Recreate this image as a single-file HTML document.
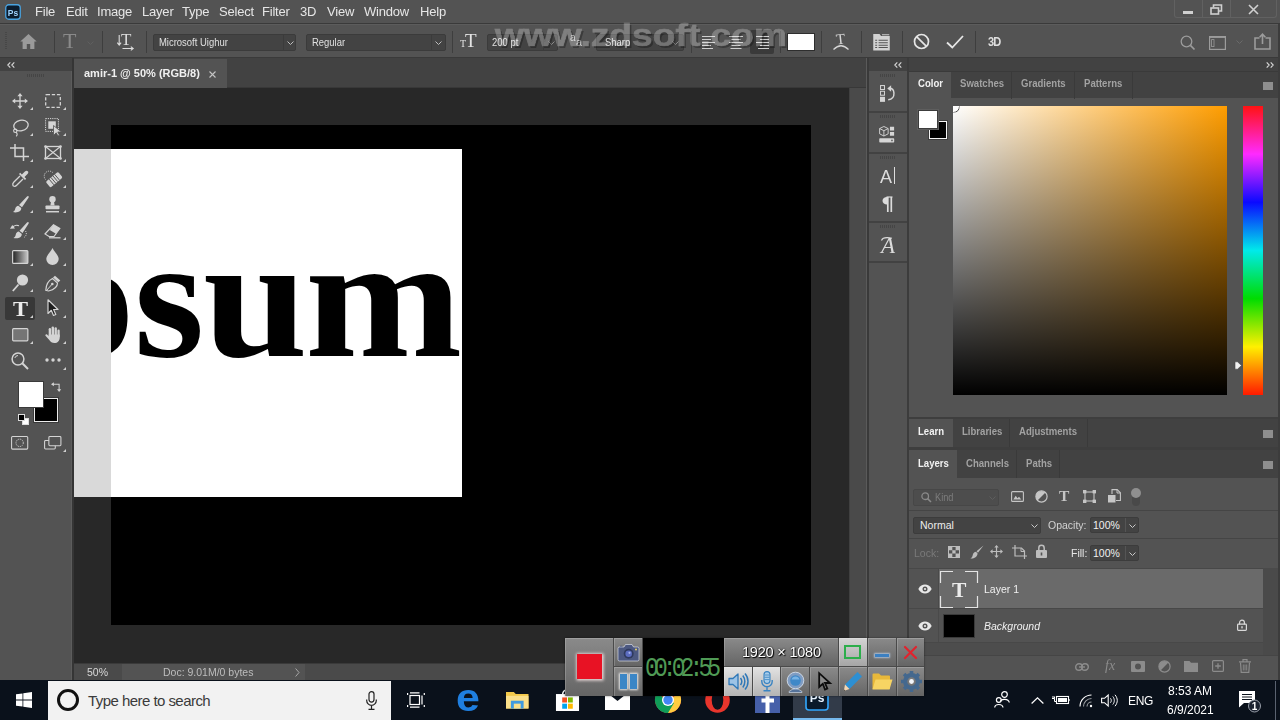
<!DOCTYPE html>
<html lang="en">
<head>
<meta charset="utf-8">
<title>amir-1 @ 50% (RGB/8)</title>
<style>
*{box-sizing:border-box;margin:0;padding:0}
html,body{width:1280px;height:720px;overflow:hidden;background:#535353;font-family:"Liberation Sans",sans-serif;}
#root{position:relative;width:1280px;height:720px;overflow:hidden;background:#535353;color:#ddd;font-size:11px}
.abs{position:absolute}
.t{position:absolute;white-space:nowrap;line-height:1}
svg{position:absolute;overflow:visible}
/* menu bar */
#menubar{left:0;top:0;width:1280px;height:24px;background:#535353;border-bottom:1px solid #3a3a3a}
#menubar .t{top:5px;font-size:13px;color:#e6e6e6;letter-spacing:-0.2px}
/* options bar */
#optbar{left:0;top:24px;width:1280px;height:34px;background:#535353;border-top:1px solid #5c5c5c;border-bottom:1px solid #3a3a3a}
.vsep{position:absolute;width:1px;background:#3e3e3e;top:8px;height:20px}
.dd{position:absolute;background:#434343;border:1px solid #3b3b3b;border-radius:2px;height:17px;top:8.500px}
.dd .t{top:2.500px;left:5px;font-size:10.5px;color:#e0e0e0;transform:scaleX(.9);transform-origin:0 50%}
.big{top:61.800px;font-family:'Liberation Serif',serif;font-weight:bold;font-size:173px;color:#000;transform-origin:0 0}
/* left toolbar */
#tools{left:0;top:58px;width:74px;height:623px;background:#535353;border-right:2px solid #353535;box-shadow:inset -1px 0 0 #5c5c5c}
.hdr{position:absolute;left:0;top:0;height:13px;background:#424242;width:100%}
/* document */
#doc{left:74px;top:58px;width:793px;height:623px;background:#282828}
#tabbar{left:0;top:0;width:793px;height:30px;background:#424242;border-bottom:1px solid #383838}
#tab{left:0;top:1px;width:153px;height:29px;background:#535353}
/* right */
#strip{left:869px;top:58px;width:39px;height:623px;background:#535353}
#rpanel{left:909px;top:58px;width:371px;height:623px;background:#535353}
.grip{position:absolute;width:16px;height:3px;background:repeating-linear-gradient(90deg,#454545 0 1px,transparent 1px 2px)}
.ptab{position:absolute;top:0;height:27px;font-size:11px;font-weight:bold;color:#a2a2a2;line-height:23px;padding:0 0 0 9px;border-right:1px solid #3a3a3a}
.ptab span{display:inline-block;transform:scaleX(.87);transform-origin:0 50%}
.lh25 .ptab{line-height:25px;height:28px}.lh27 .ptab{line-height:27px;height:28px}
.ptab.on{background:#535353;color:#f2f2f2;border-right:none}
.pmenu{position:absolute;left:354px;width:10px;height:8px;background:#8e8e8e}
.rc{position:absolute;background:linear-gradient(#8a8a8a,#656565);box-shadow:inset 1px 1px 0 rgba(255,255,255,.18)}
.rc.hi{background:linear-gradient(#d4d4d4,#a6a6a6)}
.rc.hi2{background:linear-gradient(#e2e2e2,#b4b4b4)}
/* taskbar */
#taskbar{left:0;top:680px;width:1280px;height:40px;background:#0a111b}
</style>
</head>
<body>
<div id="root">

<!-- MENU BAR -->
<div id="menubar" class="abs">
  <svg style="left:5px;top:4px" width="16" height="16" viewBox="0 0 16 16"><rect x="0.75" y="0.75" width="14.5" height="14.5" rx="3" fill="#0b1c2e" stroke="#4aa3e0" stroke-width="1.3"/><text x="8" y="11.6" font-family="Liberation Sans, sans-serif" font-size="8.5" font-weight="bold" fill="#9fd4ff" text-anchor="middle">Ps</text></svg>
  <span class="t" style="left:35px">File</span>
  <span class="t" style="left:66px">Edit</span>
  <span class="t" style="left:97px">Image</span>
  <span class="t" style="left:142px">Layer</span>
  <span class="t" style="left:182px">Type</span>
  <span class="t" style="left:219px">Select</span>
  <span class="t" style="left:262px">Filter</span>
  <span class="t" style="left:300px">3D</span>
  <span class="t" style="left:327px">View</span>
  <span class="t" style="left:364px">Window</span>
  <span class="t" style="left:420px">Help</span>
  <!-- window controls -->
  <div class="abs" style="left:1174px;top:0;width:103px;height:18px;border:1px solid #616161;border-top:none;border-radius:0 0 3px 3px"></div>
  <div class="abs" style="left:1202px;top:0;width:1px;height:18px;background:#616161"></div>
  <div class="abs" style="left:1230px;top:0;width:1px;height:18px;background:#616161"></div>
  <div class="abs" style="left:1183px;top:11px;width:10px;height:3px;background:#d0d0d0"></div>
  <svg style="left:1210px;top:4px" width="13" height="11" viewBox="0 0 13 11"><path d="M3.5 3.5V1h8v6H9" fill="none" stroke="#d0d0d0" stroke-width="1.6"/><rect x="1" y="4" width="7.5" height="6" fill="none" stroke="#d0d0d0" stroke-width="1.6"/></svg>
  <svg style="left:1248px;top:4px" width="11" height="11" viewBox="0 0 11 11"><path d="M1 1l9 9M10 1l-9 9" stroke="#d0d0d0" stroke-width="1.6"/></svg>
</div>

<!-- OPTIONS BAR -->
<div id="optbar" class="abs">
  <!-- coordinates inside are relative to top:24 (border 1px) -->
  <div class="abs" style="left:5px;top:7px;width:2px;height:18px;background:repeating-linear-gradient(#474747 0 1px,transparent 1px 2px)"></div>
  <!-- home -->
  <svg style="left:20px;top:9px" width="17" height="15" viewBox="0 0 17 15"><path d="M8.5 0L0.3 7.6H2.6V15H6.8V10H10.2V15H14.4V7.6H16.7Z" fill="#9a9a9a"/></svg>
  <div class="vsep" style="left:54px;top:6px;height:22px"></div>
  <span class="t" style="left:63px;top:5px;font-family:'Liberation Serif',serif;font-size:22px;color:#8a8a8a">T</span>
  <svg style="left:87px;top:16px" width="7" height="4" viewBox="0 0 7 4"><path d="M0.5 0.5l3 3 3-3" fill="none" stroke="#5f5f5f" stroke-width="1"/></svg>
  <div class="vsep" style="left:102px;top:6px;height:22px"></div>
  <!-- text orientation -->
  <span class="t" style="left:121px;top:6px;font-family:'Liberation Serif',serif;font-size:17px;color:#dcdcdc">T</span>
  <svg style="left:117px;top:10px" width="18" height="16" viewBox="0 0 18 16"><path d="M2.2 0v9.5M0.3 7.6l1.9 2.4 1.9-2.4" fill="none" stroke="#dcdcdc" stroke-width="1.1"/><path d="M5.5 13.5H16M13.8 11.6l2.4 1.9-2.4 1.9" fill="none" stroke="#dcdcdc" stroke-width="1.1"/></svg>
  <div class="vsep" style="left:146px;top:6px;height:22px"></div>
  <!-- font family -->
  <div class="dd" style="left:153px;width:143px"><span class="t">Microsoft Uighur</span><div class="abs" style="left:129px;top:0;width:1px;height:16px;background:#3b3b3b"></div><svg style="left:133px;top:6px" width="7" height="4" viewBox="0 0 7 4"><path d="M0.5 0.5l3 3 3-3" fill="none" stroke="#bdbdbd" stroke-width="1"/></svg></div>
  <!-- font style -->
  <div class="dd" style="left:306px;width:140px"><span class="t">Regular</span><div class="abs" style="left:124px;top:0;width:1px;height:16px;background:#3b3b3b"></div><svg style="left:128px;top:6px" width="7" height="4" viewBox="0 0 7 4"><path d="M0.5 0.5l3 3 3-3" fill="none" stroke="#bdbdbd" stroke-width="1"/></svg></div>
  <div class="vsep" style="left:452px;top:6px;height:22px"></div>
  <!-- tT -->
  <span class="t" style="left:460px;top:14px;font-family:'Liberation Serif',serif;font-size:10px;color:#e4e4e4">T</span>
  <span class="t" style="left:465px;top:6px;font-family:'Liberation Serif',serif;font-size:19px;color:#e4e4e4">T</span>
  <div class="dd" style="left:487px;width:71px"><span class="t" style="left:4px">200 pt</span><div class="abs" style="left:55px;top:0;width:1px;height:16px;background:#3b3b3b"></div><svg style="left:60px;top:6px" width="7" height="4" viewBox="0 0 7 4"><path d="M0.5 0.5l3 3 3-3" fill="none" stroke="#8a8a8a" stroke-width="1"/></svg></div>
  <!-- aa -->
  <span class="t" style="left:570px;top:8px;font-size:10px;color:#cfcfcf">a</span>
  <span class="t" style="left:576px;top:12px;font-size:11px;color:#cfcfcf">a</span>
  <div class="dd" style="left:596px;width:88px"><span class="t" style="left:8px">Sharp</span><svg style="left:75px;top:6px" width="7" height="4" viewBox="0 0 7 4"><path d="M0.5 0.5l3 3 3-3" fill="none" stroke="#8a8a8a" stroke-width="1"/></svg></div>
  <div class="vsep" style="left:691px;top:6px;height:22px"></div>
  <!-- align -->
  <svg style="left:702px;top:11px" width="14" height="13" viewBox="0 0 14 13"><path d="M0 .5h13M0 3.5h9M0 6.5h13M0 9.5h9M0 12.5h11" stroke="#cfcfcf" stroke-width="1.2"/></svg>
  <svg style="left:729px;top:11px" width="14" height="13" viewBox="0 0 14 13"><path d="M0 .5h14M2.5 3.5h9M0 6.5h14M2.5 9.5h9M1.5 12.5h11" stroke="#cfcfcf" stroke-width="1.2"/></svg>
  <div class="abs" style="left:750px;top:5px;width:24px;height:24px;background:#3a3a3a;border-radius:2px"></div>
  <svg style="left:756px;top:11px" width="14" height="13" viewBox="0 0 14 13"><path d="M0 .5h13M4 3.5h9M0 6.5h13M4 9.5h9M2 12.5h11" stroke="#cfcfcf" stroke-width="1.2"/></svg>
  <div class="vsep" style="left:780px;top:6px;height:22px"></div>
  <div class="abs" style="left:787px;top:8px;width:28px;height:18px;background:#fff;border:1px solid #2e2e2e"></div>
  <div class="vsep" style="left:821px;top:6px;height:22px"></div>
  <!-- warp text -->
  <span class="t" style="left:836px;top:7px;font-family:'Liberation Serif',serif;font-size:15px;color:#d6d6d6;transform:rotate(-6deg)">T</span>
  <svg style="left:833px;top:19px" width="16" height="6" viewBox="0 0 16 6"><path d="M0.5 5.5Q8 -2 15.5 5.5" fill="none" stroke="#d6d6d6" stroke-width="1.2"/></svg>
  <div class="vsep" style="left:861px;top:6px;height:22px"></div>
  <!-- panels icon -->
  <svg style="left:873px;top:8.500px" width="17" height="16.500" viewBox="0 0 17 17"><path d="M0 0H6.5L8 2H17V17H0Z" fill="#d2d2d2"/><path d="M9 .8h7.5" stroke="#d2d2d2" stroke-width="1"/><path d="M2 6.5h2M5.5 6.5H15M2 9h2M5.5 9H15M2 11.500h2M5.5 11.500H15M2 14h2M5.500 14H15" stroke="#535353" stroke-width="1.1"/></svg>
  <div class="vsep" style="left:902px;top:6px;height:22px"></div>
  <svg style="left:913px;top:8px" width="17" height="17" viewBox="0 0 17 17"><circle cx="8.5" cy="8.5" r="7" fill="none" stroke="#e6e6e6" stroke-width="1.7"/><path d="M3.600 3.600L13.400 13.400" stroke="#e6e6e6" stroke-width="1.7"/></svg>
  <svg style="left:946px;top:10px" width="18" height="14" viewBox="0 0 18 14"><path d="M1 7.500L6.300 12.500L17 1" fill="none" stroke="#e6e6e6" stroke-width="1.8"/></svg>
  <div class="vsep" style="left:975px;top:6px;height:22px"></div>
  <span class="t" style="left:988px;top:10px;font-size:13.500px;font-weight:bold;color:#dedede;letter-spacing:-1px;transform:scaleX(.82);transform-origin:left">3D</span>
  <!-- right icons -->
  <svg style="left:1180px;top:10px" width="16" height="16" viewBox="0 0 16 16"><circle cx="6.500" cy="6.500" r="5.300" fill="none" stroke="#9c9c9c" stroke-width="1.3"/><path d="M10.400 10.400L14.500 14.500" stroke="#9c9c9c" stroke-width="1.700"/></svg>
  <svg style="left:1209px;top:11px" width="17" height="14" viewBox="0 0 17 14"><rect x=".6" y=".6" width="15.800" height="12.800" fill="none" stroke="#9c9c9c" stroke-width="1.200"/><path d="M.6 1.200h15.800" stroke="#9c9c9c" stroke-width="1.400"/><rect x="2.600" y="3.600" width="2.400" height="7" fill="none" stroke="#9c9c9c" stroke-width=".8"/></svg>
  <svg style="left:1236px;top:15px" width="7" height="4" viewBox="0 0 7 4"><path d="M0.500 0.500l3 3 3-3" fill="none" stroke="#6a6a6a" stroke-width="1"/></svg>
  <svg style="left:1254px;top:8px" width="17" height="17" viewBox="0 0 17 17"><path d="M5.500 5H1V16H16V5H11.500" fill="none" stroke="#9c9c9c" stroke-width="1.600"/><path d="M8.500 11V1.500M5.600 4.200L8.500 1.200l2.900 3" fill="none" stroke="#9c9c9c" stroke-width="1.600"/></svg>
</div>
<!-- watermark -->
<div id="wm" class="t" style="left:494.500px;top:19.500px;font-size:31px;font-weight:bold;color:#a0a0a0;-webkit-text-stroke:.7px #a0a0a0;mix-blend-mode:hard-light;transform:scaleX(1.200);transform-origin:0 0;text-shadow:1.500px 1.500px .5px #5a5a5a">www.zdsoft.com</div>

<!-- LEFT TOOLBAR -->
<div id="tools" class="abs">
  <div class="hdr"></div>
  <svg style="left:7px;top:4px" width="8" height="6" viewBox="0 0 8 6"><path d="M3.300.4L.8 3l2.500 2.600M7.300.4L4.800 3l2.500 2.600" fill="none" stroke="#d8d8d8" stroke-width="1.100"/></svg>
  <div class="grip" style="left:27px;top:16px;width:18px"></div>
  <svg style="left:30px;top:49px" width="3" height="3" viewBox="0 0 3 3"><path d="M3 0V3H0Z" fill="#cfcfcf"/></svg>
  <svg style="left:63px;top:49px" width="3" height="3" viewBox="0 0 3 3"><path d="M3 0V3H0Z" fill="#cfcfcf"/></svg>
  <svg style="left:30px;top:75px" width="3" height="3" viewBox="0 0 3 3"><path d="M3 0V3H0Z" fill="#cfcfcf"/></svg>
  <svg style="left:63px;top:75px" width="3" height="3" viewBox="0 0 3 3"><path d="M3 0V3H0Z" fill="#cfcfcf"/></svg>
  <svg style="left:30px;top:101px" width="3" height="3" viewBox="0 0 3 3"><path d="M3 0V3H0Z" fill="#cfcfcf"/></svg>
  <svg style="left:63px;top:101px" width="3" height="3" viewBox="0 0 3 3"><path d="M3 0V3H0Z" fill="#cfcfcf"/></svg>
  <svg style="left:30px;top:127px" width="3" height="3" viewBox="0 0 3 3"><path d="M3 0V3H0Z" fill="#cfcfcf"/></svg>
  <svg style="left:63px;top:127px" width="3" height="3" viewBox="0 0 3 3"><path d="M3 0V3H0Z" fill="#cfcfcf"/></svg>
  <svg style="left:30px;top:152px" width="3" height="3" viewBox="0 0 3 3"><path d="M3 0V3H0Z" fill="#cfcfcf"/></svg>
  <svg style="left:63px;top:152px" width="3" height="3" viewBox="0 0 3 3"><path d="M3 0V3H0Z" fill="#cfcfcf"/></svg>
  <svg style="left:30px;top:179px" width="3" height="3" viewBox="0 0 3 3"><path d="M3 0V3H0Z" fill="#cfcfcf"/></svg>
  <svg style="left:63px;top:179px" width="3" height="3" viewBox="0 0 3 3"><path d="M3 0V3H0Z" fill="#cfcfcf"/></svg>
  <svg style="left:30px;top:205px" width="3" height="3" viewBox="0 0 3 3"><path d="M3 0V3H0Z" fill="#cfcfcf"/></svg>
  <svg style="left:63px;top:205px" width="3" height="3" viewBox="0 0 3 3"><path d="M3 0V3H0Z" fill="#cfcfcf"/></svg>
  <svg style="left:30px;top:231px" width="3" height="3" viewBox="0 0 3 3"><path d="M3 0V3H0Z" fill="#cfcfcf"/></svg>
  <svg style="left:63px;top:231px" width="3" height="3" viewBox="0 0 3 3"><path d="M3 0V3H0Z" fill="#cfcfcf"/></svg>
  <svg style="left:30px;top:257px" width="3" height="3" viewBox="0 0 3 3"><path d="M3 0V3H0Z" fill="#cfcfcf"/></svg>
  <svg style="left:63px;top:257px" width="3" height="3" viewBox="0 0 3 3"><path d="M3 0V3H0Z" fill="#cfcfcf"/></svg>
  <svg style="left:30px;top:283px" width="3" height="3" viewBox="0 0 3 3"><path d="M3 0V3H0Z" fill="#cfcfcf"/></svg>
  <svg style="left:63px;top:283px" width="3" height="3" viewBox="0 0 3 3"><path d="M3 0V3H0Z" fill="#cfcfcf"/></svg>
  <svg style="left:63px;top:309px" width="3" height="3" viewBox="0 0 3 3"><path d="M3 0V3H0Z" fill="#cfcfcf"/></svg>
  <!-- row1 move / marquee -->
  <svg style="left:12px;top:35px" width="16" height="16" viewBox="0 0 16 16"><path d="M8 2V14M2 8H14" stroke="#d4d4d4" stroke-width="1.300"/><path d="M8 0L10.600 3.200H5.400ZM8 16L10.600 12.800H5.400ZM0 8L3.200 5.400V10.600ZM16 8L12.800 5.400V10.600Z" fill="#d4d4d4"/></svg>
  <svg style="left:45px;top:36px" width="16" height="14" viewBox="0 0 16 14"><rect x=".7" y=".7" width="14.600" height="12.600" rx="1" fill="none" stroke="#d4d4d4" stroke-width="1.300" stroke-dasharray="3.300 1.800"/></svg>
  <!-- row2 lasso / object select -->
  <svg style="left:12px;top:61px" width="17" height="18" viewBox="0 0 17 18"><ellipse cx="9" cy="6.500" rx="7.300" ry="5.300" transform="rotate(-12 9 6.500)" fill="none" stroke="#d4d4d4" stroke-width="1.300"/><circle cx="3.300" cy="11.800" r="1.700" fill="none" stroke="#d4d4d4" stroke-width="1.100"/><path d="M4 13.300C5.500 14.500 5.500 16 4.200 17.300" fill="none" stroke="#d4d4d4" stroke-width="1.100"/></svg>
  <svg style="left:45px;top:60px" width="17" height="18" viewBox="0 0 17 18"><rect x=".6" y=".6" width="12.800" height="12.800" fill="none" stroke="#d4d4d4" stroke-width="1" stroke-dasharray="1.200 1"/><rect x="3.300" y="3.300" width="7.500" height="7.500" fill="#d4d4d4"/><path d="M8.500 7.500V17.500L11.200 14.800 13 18 14.500 17.200 12.800 14H16.500Z" fill="#d4d4d4" stroke="#535353" stroke-width=".8"/></svg>
  <!-- row3 crop / frame -->
  <svg style="left:10px;top:86px" width="19" height="17" viewBox="0 0 19 17"><path d="M5 0V12.500H19M0 4H13.500V17" fill="none" stroke="#d4d4d4" stroke-width="1.500"/></svg>
  <svg style="left:44px;top:87px" width="18" height="15" viewBox="0 0 18 15"><rect x="1.500" y="1.500" width="15" height="12" fill="none" stroke="#d4d4d4" stroke-width="1.300"/><path d="M1.500 1.500L16.500 13.500M16.500 1.500L1.500 13.500" stroke="#d4d4d4" stroke-width="1.200"/><circle cx="1.500" cy="1.500" r="1.300" fill="#d4d4d4"/><circle cx="16.500" cy="1.500" r="1.300" fill="#d4d4d4"/><circle cx="1.500" cy="13.500" r="1.300" fill="#d4d4d4"/><circle cx="16.500" cy="13.500" r="1.300" fill="#d4d4d4"/></svg>
  <!-- row4 eyedropper / healing -->
  <svg style="left:12px;top:112px" width="17" height="17" viewBox="0 0 17 17"><path d="M8 6L1.700 12.300C.8 13.200.5 14.500 1 15.500L1.500 16C2.500 16.500 3.800 16.200 4.700 15.300L11 9" fill="none" stroke="#d4d4d4" stroke-width="1.300"/><path d="M7 4L13 10L14.200 8.800L12.500 7.100L15.500 4.100C16.500 3.100 16.500 1.900 15.800 1.200C15.100.5 13.900.5 12.900 1.500L9.900 4.500L8.200 2.800Z" fill="#d4d4d4"/></svg>
  <svg style="left:44px;top:112px" width="18" height="17" viewBox="0 0 18 17"><g transform="rotate(-40 10 9.500)"><rect x="2" y="6" width="16" height="7.500" rx="1.500" fill="#d4d4d4"/><path d="M6.500 6V13.500M9 6V13.500M11.500 6V13.500M13.800 6V13.500" stroke="#535353" stroke-width=".9"/></g><path d="M1.500 9.500A5 5 0 0 1 9 2.800" fill="none" stroke="#d4d4d4" stroke-width="1" stroke-dasharray="1 1"/></svg>
  <!-- row5 brush / stamp -->
  <svg style="left:13px;top:138px" width="16" height="17" viewBox="0 0 16 17"><path d="M15.500.3C15.900.7 15.800 1.300 15.500 1.800L9 11.300 6 9 14 .6C14.500.1 15.100-.1 15.500.3Z" fill="#d4d4d4"/><path d="M5.300 9.700L8.300 12C8.300 14.500 6.500 16 4 16.300 2.500 16.500 1 16.300 0 16 1.500 15.300 2 14 2.300 12.500 2.600 11 3.800 9.900 5.300 9.700Z" fill="#d4d4d4"/></svg>
  <svg style="left:45px;top:138px" width="15" height="17" viewBox="0 0 15 17"><circle cx="7.500" cy="3.200" r="3.200" fill="#d4d4d4"/><path d="M6 5.500H9L9.600 9.500H5.400Z" fill="#d4d4d4"/><rect x=".5" y="9.500" width="14" height="3.700" rx=".8" fill="#d4d4d4"/><path d="M1 15.700H14" stroke="#d4d4d4" stroke-width="1.500"/></svg>
  <!-- row6 history brush / eraser -->
  <svg style="left:10px;top:164px" width="19" height="18" viewBox="0 0 19 18"><path d="M18.500.3C18.900.7 18.800 1.300 18.500 1.800L12.500 11 9.500 8.800 17 .6C17.500.1 18.100-.1 18.500.3Z" fill="#d4d4d4"/><path d="M8.800 9.600L11.800 11.900C11.800 14.400 10 15.900 7.500 16.200 6 16.400 4.500 16.200 3.500 15.900 5 15.200 5.500 13.900 5.800 12.400 6.100 10.900 7.300 9.800 8.800 9.600Z" fill="#d4d4d4"/><path d="M2.500 5.500C4 3.300 7 2.800 9 3.800" fill="none" stroke="#d4d4d4" stroke-width="1.100"/><path d="M0 6.800L5 6.500 2.300 3Z" fill="#d4d4d4"/><path d="M15.500 9C17 11 16.500 14 14 15.500" fill="none" stroke="#d4d4d4" stroke-width="1" stroke-dasharray="1 1.200"/></svg>
  <svg style="left:44px;top:166px" width="17" height="15" viewBox="0 0 17 15"><path d="M9.500.8L15.800 4.500 10 12.500H5L1 10Z" fill="none" stroke="#d4d4d4" stroke-width="1.200"/><path d="M9.500.8L15.800 4.500 12 9.800 5.700 6Z" fill="#d4d4d4"/><path d="M5 13.800H16.500" stroke="#d4d4d4" stroke-width="1.300"/></svg>
  <!-- row7 gradient / blur -->
  <svg style="left:11.500px;top:191.500px" width="16.500" height="14" viewBox="0 0 18 15" preserveAspectRatio="none"><defs><linearGradient id="gr1" x1="0" x2="1" y1="0" y2="0"><stop offset="0" stop-color="#222"/><stop offset="1" stop-color="#c8c8c8"/></linearGradient></defs><rect x=".7" y=".7" width="16.600" height="13.600" rx="1" fill="url(#gr1)" stroke="#d4d4d4" stroke-width="1.300"/></svg>
  <svg style="left:46px;top:190px" width="13" height="17" viewBox="0 0 13 17"><path d="M6.500 0C8 4 12.700 7 12.700 11A6.200 6 0 0 1 .3 11C.3 7 5 4 6.500 0Z" fill="#d4d4d4"/></svg>
  <!-- row8 dodge / pen -->
  <svg style="left:12px;top:216px" width="17" height="18" viewBox="0 0 17 18"><circle cx="10.500" cy="6" r="5.600" fill="#d4d4d4"/><path d="M6.500 10.500L.8 17" stroke="#d4d4d4" stroke-width="1.800"/></svg>
  <svg style="left:45px;top:217px" width="16" height="17" viewBox="0 0 16 17"><path d="M10 .7L15.300 5.500 13.300 7.300 8 2.600Z" fill="#d4d4d4"/><path d="M7.500 3.500L12.500 8C12.500 11.500 9.500 14.500 3.500 16L.8 15.300C1 10 3.500 5.500 7.500 3.500Z" fill="none" stroke="#d4d4d4" stroke-width="1.200"/><path d="M1.500 15.500L6.800 9.500" stroke="#d4d4d4" stroke-width="1"/><circle cx="7.300" cy="9" r="1.300" fill="#d4d4d4"/></svg>
  <!-- row9 type (selected) / path select -->
  <div class="abs" style="left:5px;top:239px;width:30px;height:23px;background:#383838;border-radius:2px"></div>
  <svg style="left:30px;top:257px" width="3" height="3" viewBox="0 0 3 3"><path d="M3 0V3H0Z" fill="#cfcfcf"/></svg>
  <span class="t" style="left:12.500px;top:241px;font-family:'Liberation Serif',serif;font-weight:bold;font-size:21.500px;color:#ececec;transform:scaleX(1.050);transform-origin:0 0">T</span>
  <svg style="left:47px;top:241px" width="12" height="18" viewBox="0 0 12 18"><path d="M1 .8V14.500L4.300 11.300 6.500 16.500 8.800 15.500 6.600 10.500H11Z" fill="#1e1e1e" stroke="#d4d4d4" stroke-width="1.200" stroke-linejoin="round"/></svg>
  <!-- row10 rectangle / hand -->
  <svg style="left:12px;top:270px" width="16.500" height="13.500" viewBox="0 0 18 14" preserveAspectRatio="none"><rect x=".7" y=".7" width="16.600" height="12.600" rx="1" fill="#757575" stroke="#d4d4d4" stroke-width="1.300"/></svg>
  <svg style="left:45px;top:268px" width="16" height="17" viewBox="0 0 16 17"><g fill="#d4d4d4"><rect x="3.700" y="2" width="2.400" height="9" rx="1.200"/><rect x="6.600" y=".4" width="2.400" height="10" rx="1.200"/><rect x="9.500" y="1.200" width="2.400" height="10" rx="1.200"/><rect x="12.400" y="3.600" width="2.300" height="8" rx="1.150"/><path d="M3.700 8.500H14.700V11.500C14.700 15 12.500 17 9.500 17 7 17 5.500 16 4.300 14L.5 9.700C-.1 8.700 1.200 7.600 2.100 8.500L3.700 10.200Z"/></g></svg>
  <!-- row11 zoom / dots -->
  <svg style="left:11px;top:294px" width="18" height="18" viewBox="0 0 18 18"><circle cx="7" cy="7" r="5.900" fill="none" stroke="#d4d4d4" stroke-width="1.500"/><path d="M11.300 11.300L17 17" stroke="#d4d4d4" stroke-width="2"/><path d="M3.800 6A3.500 3.500 0 0 1 7 3.500" fill="none" stroke="#d4d4d4" stroke-width="1"/></svg>
  <svg style="left:45px;top:300px" width="16" height="4" viewBox="0 0 16 4"><circle cx="2" cy="2" r="1.700" fill="#d4d4d4"/><circle cx="8" cy="2" r="1.700" fill="#d4d4d4"/><circle cx="14" cy="2" r="1.700" fill="#d4d4d4"/></svg>
  <!-- color swatches: fg 18..43 x 381..406 ; bg 33..57 x 397..422 -->
  <div class="abs" style="left:33.500px;top:339.500px;width:24px;height:24.500px;background:#000;border:1.500px solid #ececec;outline:1px solid #3a3a3a"></div>
  <div class="abs" style="left:18.500px;top:324px;width:24.500px;height:24.500px;background:#fff;outline:1px solid #3a3a3a"></div>
  <svg style="left:50.500px;top:323.500px" width="10.500" height="10" viewBox="0 0 11 11" preserveAspectRatio="none"><path d="M2 2.500H8.500V9" fill="none" stroke="#d4d4d4" stroke-width="1.100"/><path d="M0 2.500L3 .3V4.700ZM8.500 11L6.300 8H10.700Z" fill="#d4d4d4"/></svg>
  <div class="abs" style="left:22px;top:360px;width:7px;height:7px;background:#fff;border:1px solid #ddd"></div>
  <div class="abs" style="left:18px;top:356px;width:7px;height:7px;background:#000;border:1px solid #ddd"></div>
  <!-- quick mask / screen mode -->
  <svg style="left:11px;top:378px" width="17.300" height="13.700" viewBox="0 0 18 14" preserveAspectRatio="none"><rect x=".6" y=".6" width="16.800" height="12.800" rx="1" fill="none" stroke="#d4d4d4" stroke-width="1.100"/><circle cx="9" cy="7" r="3.800" fill="none" stroke="#d4d4d4" stroke-width="1" stroke-dasharray="1.200 1"/></svg>
  <svg style="left:44px;top:377.500px" width="17.500" height="13.500" viewBox="0 0 18 14" preserveAspectRatio="none"><rect x=".6" y="4.600" width="11" height="8.800" rx="1" fill="none" stroke="#d4d4d4" stroke-width="1.100"/><rect x="5" y=".6" width="12.400" height="9.500" rx="1" fill="#535353" stroke="#d4d4d4" stroke-width="1.100"/></svg>
  <svg style="left:63px;top:391px" width="3" height="3" viewBox="0 0 3 3"><path d="M3 0V3H0Z" fill="#cfcfcf"/></svg>
</div>

<!-- DOCUMENT -->
<div id="doc" class="abs">
  <div id="tabbar" class="abs"><div id="tab" class="abs"><span class="t" style="left:10px;top:9px;font-size:11px;font-weight:bold;color:#f0f0f0">amir-1 @ 50% (RGB/8)</span><svg style="left:135px;top:12px" width="7" height="7" viewBox="0 0 7 7"><path d="M.5.5l6 6M6.500.5l-6 6" stroke="#c4c4c4" stroke-width="1.100"/></svg></div></div>
  <!-- canvas viewport (abs 74..849, 88..662) -->
  <div class="abs" style="left:0;top:30px;width:775px;height:575px;background:#282828;overflow:hidden">
    <div class="abs" style="left:37px;top:37px;width:700px;height:500px;background:#000"></div>
    <div class="abs" style="left:0;top:61px;width:388px;height:348px;background:#fff;overflow:hidden">
      <div class="abs" style="left:0;top:0;width:37px;height:348px;background:#d9d9d9"></div>
      <div class="abs" style="left:37px;top:0;width:351px;height:348px;overflow:hidden">
        <span class="t big" style="left:-69.100px;transform:scaleX(1.07)">o</span><span class="t big" style="left:23.300px;transform:scaleX(1.045)">s</span><span class="t big" style="left:91.700px;transform:scaleX(1.09)">u</span><span class="t big" style="left:194px;transform:scaleX(1.092)">m</span>
      </div>
    </div>
  </div>
  <!-- v scrollbar -->
  <div class="abs" style="left:775px;top:30px;width:18px;height:575px;background:#4a4a4a;border-left:1px solid #404040"></div>
  <!-- status bar -->
  <div class="abs" style="left:0;top:605px;width:793px;height:18px;background:#4a4a4a;border-top:1px solid #3a3a3a">
    <div class="abs" style="left:48px;top:0;width:183px;height:17px;background:#535353"></div>
    <span class="t" style="left:13px;top:3px;font-size:10.500px;color:#d8d8d8">50%</span>
    <span class="t" style="left:89px;top:3px;font-size:10.500px;color:#bdbdbd">Doc: 9.01M/0 bytes</span>
    <svg style="left:221px;top:4px" width="5" height="9" viewBox="0 0 5 9"><path d="M.6.5l3.400 4-3.400 4" fill="none" stroke="#a8a8a8" stroke-width="1"/></svg>
  </div>
</div>

<!-- RIGHT ICON STRIP -->
<div id="strip" class="abs">
  <div class="hdr"></div>
  <svg style="left:25px;top:4px" width="8" height="6" viewBox="0 0 8 6"><path d="M3.300.4L.8 3l2.500 2.600M7.300.4L4.800 3l2.500 2.600" fill="none" stroke="#d8d8d8" stroke-width="1.100"/></svg>
  <!-- group separators (y relative to 58) -->
  <div class="abs" style="left:0;top:53px;width:39px;height:2px;background:#424242"></div>
  <div class="abs" style="left:0;top:94px;width:39px;height:2px;background:#424242"></div>
  <div class="abs" style="left:0;top:163px;width:39px;height:2px;background:#424242"></div>
  <div class="abs" style="left:0;top:203px;width:39px;height:2px;background:#424242"></div>
  <div class="grip" style="left:11px;top:16px"></div>
  <div class="grip" style="left:11px;top:57px"></div>
  <div class="grip" style="left:11px;top:98px"></div>
  <div class="grip" style="left:11px;top:167px"></div>
  <!-- history -->
  <svg style="left:10.500px;top:27px" width="15.500" height="17.500" viewBox="0 0 17 19" preserveAspectRatio="none"><rect x=".6" y=".6" width="4.300" height="4.300" fill="none" stroke="#d6d6d6" stroke-width="1.100"/><rect x=".6" y="6.800" width="4.300" height="4.300" fill="none" stroke="#d6d6d6" stroke-width="1.100"/><rect x="0" y="12.800" width="5.500" height="5.500" fill="#d6d6d6"/><path d="M9 16c4.500-.5 6.500-3.500 6.300-7.200C15.100 5.500 13 3.600 10.200 3.600" fill="none" stroke="#d6d6d6" stroke-width="1.600"/><path d="M8 3.800L12.200.3V7.200Z" fill="#d6d6d6"/></svg>
  <!-- 3D/properties -->
  <svg style="left:10px;top:68px" width="16" height="17" viewBox="0 0 18 18" preserveAspectRatio="none"><path d="M5.500.5l4.800 2.200v5.600L5.500 10.600.7 8.300V2.700Z M.7 2.700L5.500 5l4.800-2.300M5.500 5v5.600" fill="none" stroke="#d6d6d6" stroke-width="1"/><rect x="12.300" y=".8" width="4.700" height="4" fill="#d6d6d6"/><rect x="12.300" y="6.300" width="4.700" height="4" fill="#d6d6d6"/><rect x=".3" y="13" width="16.800" height="4.500" rx=".8" fill="#d6d6d6"/><circle cx="14.600" cy="15.250" r=".9" fill="#535353"/></svg>
  <!-- A| -->
  <span class="t" style="left:11px;top:109.500px;font-size:18px;color:#dcdcdc">A</span>
  <div class="abs" style="left:24.500px;top:109px;width:1px;height:17px;background:#dcdcdc"></div>
  <!-- pilcrow -->
  <svg style="left:12px;top:139px" width="12" height="15" viewBox="0 0 12 18" preserveAspectRatio="none"><path d="M6 0A4.500 4.500 0 0 0 6 9Z" fill="#dcdcdc"/><path d="M5.500 0H11.500" stroke="#dcdcdc" stroke-width="1.400"/><path d="M6.800 0V18M10.300 0V18" stroke="#dcdcdc" stroke-width="1.700"/></svg>
  <!-- script A -->
  <span class="t" style="left:12px;top:175.500px;font-family:'Liberation Serif',serif;font-style:italic;font-size:23px;color:#dcdcdc">A</span>
  <svg style="left:12px;top:178.500px" width="12" height="6" viewBox="0 0 12 6"><path d="M.5 3.500C1.500.5 6 .2 11 1.200" fill="none" stroke="#dcdcdc" stroke-width="1.100"/></svg>
</div>

<!-- RIGHT PANELS -->
<div id="rpanel" class="abs">
  <div class="hdr"></div>
  <svg style="left:357px;top:4px" width="8" height="6" viewBox="0 0 8 6"><path d="M.7.4L3.200 3 .7 5.600M4.700.4L7.200 3 4.700 5.600" fill="none" stroke="#d8d8d8" stroke-width="1.100"/></svg>
  <!-- COLOR tabs: y 71..98 -->
  <div class="abs" style="left:0;top:13px;width:371px;height:27px;background:#424242;border-top:1px solid #3a3a3a">
    <div class="ptab on" style="left:0;width:42px"><span>Color</span></div>
    <div class="ptab" style="left:42px;width:61px"><span>Swatches</span></div>
    <div class="ptab" style="left:103px;width:63px"><span>Gradients</span></div>
    <div class="ptab" style="left:166px;width:58px"><span>Patterns</span></div>
    <div class="pmenu" style="top:10px"></div>
  </div>
  <!-- fg/bg swatches -->
  <div class="abs" style="left:20.300px;top:62.500px;width:18px;height:18px;background:#000;border:1.500px solid #f4f4f4;outline:1px solid #3c3c3c"></div>
  <div class="abs" style="left:10.300px;top:52.700px;width:17.700px;height:17.700px;background:#fff;outline:1px solid #3c3c3c;box-shadow:0 0 0 2px #5e5e5e"></div>
  <!-- color field: abs 953..1226, 106..395 -->
  <div class="abs" style="left:44px;top:48px;width:274px;height:289px;background:linear-gradient(to top,#000,rgba(0,0,0,0)),linear-gradient(to right,#fff,#ff9d00)"></div>
  <div class="abs" style="left:37.500px;top:41.500px;width:13px;height:13px;border-radius:50%;border:1px solid #444;background:#fff;clip-path:inset(6.500px 0 0 6.500px)"></div>
  <!-- hue strip: abs 1243..1263 -->
  <div class="abs" style="left:334px;top:48px;width:20px;height:289px;background:linear-gradient(to bottom,#ff1212 0%,#ff2aff 16.660%,#0a0aff 33.330%,#00eaea 50%,#00dc00 66.660%,#fff000 83.330%,#ff1a00 100%)"></div>
  <svg style="left:325px;top:303px" width="8" height="9" viewBox="0 0 8 9"><path d="M1 .8H3.500L7.500 4.500 3.500 8.200H1Z" fill="#f2f2f2" stroke="#444" stroke-width=".6"/></svg>
  <!-- LEARN tabs: y 419..446 -->
  <div class="abs" style="left:0;top:359px;width:371px;height:2px;background:#3e3e3e"></div>
  <div class="abs lh25" style="left:0;top:361px;width:371px;height:28px;background:#424242">
    <div class="ptab on" style="left:0;width:44px"><span>Learn</span></div>
    <div class="ptab" style="left:44px;width:57px"><span>Libraries</span></div>
    <div class="ptab" style="left:101px;width:78px"><span>Adjustments</span></div>
    <div class="pmenu" style="top:11px"></div>
  </div>
  <div class="abs" style="left:0;top:389px;width:371px;height:3px;background:#3e3e3e"></div>
  <!-- LAYERS tabs: y 450..478 -->
  <div class="abs lh27" style="left:0;top:392px;width:371px;height:28px;background:#424242">
    <div class="ptab on" style="left:0;width:48px"><span>Layers</span></div>
    <div class="ptab" style="left:48px;width:60px"><span>Channels</span></div>
    <div class="ptab" style="left:108px;width:43px"><span>Paths</span></div>
    <div class="pmenu" style="top:11px"></div>
  </div>
  <!-- filter row: y 479..511 -->
  <div class="abs" style="left:4px;top:431px;width:86px;height:17px;background:#4d4d4d;border:1px solid #474747;border-radius:2px"></div>
  <svg style="left:12px;top:434px" width="11" height="11" viewBox="0 0 11 11"><circle cx="4.200" cy="4.200" r="3.300" fill="none" stroke="#8a8a8a" stroke-width="1.300"/><path d="M6.600 6.600L10 10" stroke="#8a8a8a" stroke-width="1.500"/></svg>
  <span class="t" style="left:26px;top:434px;font-size:10.500px;color:#7c7c7c;transform:scaleX(.88);transform-origin:0 50%">Kind</span>
  <svg style="left:80px;top:438px" width="7" height="4" viewBox="0 0 7 4"><path d="M.5.5l3 3 3-3" fill="none" stroke="#5e5e5e" stroke-width="1"/></svg>
  <svg style="left:102px;top:433px" width="13" height="11" viewBox="0 0 13 11"><rect x=".6" y=".6" width="11.800" height="9.800" rx="1" fill="none" stroke="#c6c6c6" stroke-width="1.100"/><path d="M2.300 8.500L4.700 4.800 6.500 7.300 8 5.800 10.300 8.500Z" fill="#c6c6c6"/></svg>
  <svg style="left:126px;top:432px" width="13" height="13" viewBox="0 0 13 13"><circle cx="6.500" cy="6.500" r="5.600" fill="none" stroke="#c6c6c6" stroke-width="1.200"/><path d="M2.540 10.460A5.600 5.600 0 0 1 10.460 2.540Z" fill="#c6c6c6"/></svg>
  <span class="t" style="left:150px;top:430px;font-family:'Liberation Serif',serif;font-weight:bold;font-size:15.500px;color:#c6c6c6">T</span>
  <svg style="left:174px;top:432px" width="13" height="13" viewBox="0 0 13 13"><rect x="2" y="2" width="9" height="9" fill="none" stroke="#c6c6c6" stroke-width="1.100"/><rect x="0" y="0" width="3.400" height="3.400" fill="#c6c6c6"/><rect x="9.600" y="0" width="3.400" height="3.400" fill="#c6c6c6"/><rect x="0" y="9.600" width="3.400" height="3.400" fill="#c6c6c6"/><rect x="9.600" y="9.600" width="3.400" height="3.400" fill="#c6c6c6"/></svg>
  <svg style="left:199px;top:431px" width="13" height="14" viewBox="0 0 13 14"><path d="M4 5V.6H9.200L12.400 3.800V11.500H8" fill="none" stroke="#c6c6c6" stroke-width="1.100"/><path d="M9 .6V4H12.400" fill="none" stroke="#c6c6c6" stroke-width="1"/><rect x="0" y="6" width="7.500" height="7.500" fill="#c6c6c6"/></svg>
  <div class="abs" style="left:223px;top:432px;width:8px;height:16px;border-radius:4px;background:#494949"></div>
  <div class="abs" style="left:222px;top:430px;width:10px;height:10px;border-radius:50%;background:#8f8f8f"></div>
  <div class="abs" style="left:0;top:452px;width:371px;height:1px;background:#454545"></div>
  <!-- blend row: y 517..533 -->
  <div class="abs" style="left:4px;top:459px;width:128px;height:17px;background:#434343;border:1px solid #3c3c3c;border-radius:2px"></div>
  <span class="t" style="left:11px;top:462px;font-size:10.500px;color:#ececec">Normal</span>
  <svg style="left:122px;top:466px" width="7" height="4" viewBox="0 0 7 4"><path d="M.5.5l3 3 3-3" fill="none" stroke="#c9c9c9" stroke-width="1"/></svg>
  <span class="t" style="left:139px;top:462px;font-size:10.500px;color:#d2d2d2">Opacity:</span>
  <div class="abs" style="left:181px;top:459px;width:49px;height:16px;background:#434343;border:1px solid #3c3c3c;border-radius:2px"></div>
  <div class="abs" style="left:216px;top:460px;width:1px;height:14px;background:#555"></div>
  <span class="t" style="left:184px;top:462px;font-size:10.500px;color:#f0f0f0">100%</span>
  <svg style="left:220px;top:466px" width="7" height="4" viewBox="0 0 7 4"><path d="M.5.5l3 3 3-3" fill="none" stroke="#c9c9c9" stroke-width="1"/></svg>
  <div class="abs" style="left:0;top:480px;width:371px;height:1px;background:#454545"></div>
  <!-- lock row: y 545..560 -->
  <span class="t" style="left:5px;top:490px;font-size:10.500px;color:#7a7a7a">Lock:</span>
  <svg style="left:39px;top:488px" width="12" height="12" viewBox="0 0 12 12"><rect x=".5" y=".5" width="11" height="11" fill="none" stroke="#bdbdbd" stroke-width="1"/><path d="M1 1h3.300v3.300H1zM7.600 1H11v3.300H7.600zM4.300 4.300h3.300v3.300H4.300zM1 7.600h3.300V11H1zM7.600 7.600H11V11H7.600z" fill="#bdbdbd"/></svg>
  <svg style="left:61px;top:487px" width="14" height="14" viewBox="0 0 14 14"><path d="M13.500.5L6.500 6.200 8 7.800Z" fill="#bdbdbd"/><path d="M6 6.800C3.500 7 2.800 9.500 2.500 11 2 12.500 1 13 .5 13.500 3.500 14 7.500 12 7.600 8.500Z" fill="#bdbdbd"/></svg>
  <svg style="left:81px;top:487px" width="13" height="13" viewBox="0 0 13 13"><path d="M6.500 1V12M1 6.500H12" stroke="#bdbdbd" stroke-width="1.200"/><path d="M6.500 0L8.700 2.600H4.300ZM6.500 13L8.700 10.400H4.300ZM0 6.500L2.600 4.300V8.700ZM13 6.500L10.400 4.300V8.700Z" fill="#bdbdbd"/></svg>
  <svg style="left:103px;top:487px" width="15" height="14" viewBox="0 0 15 14"><path d="M3 0V11H15M0 3H9.500L12.500 6V14" fill="none" stroke="#bdbdbd" stroke-width="1.200"/><path d="M9 3V6.500H12.500" fill="none" stroke="#bdbdbd" stroke-width="1"/></svg>
  <svg style="left:127px;top:486px" width="11" height="14" viewBox="0 0 11 14"><path d="M2.800 6.500V4A2.700 2.700 0 0 1 8.200 4V6.500" fill="none" stroke="#bdbdbd" stroke-width="1.500"/><rect x="0" y="6" width="11" height="8" rx="1" fill="#bdbdbd"/><rect x="4.700" y="8.500" width="1.600" height="3" fill="#535353"/></svg>
  <span class="t" style="left:162px;top:490px;font-size:10.500px;color:#e6e6e6">Fill:</span>
  <div class="abs" style="left:181px;top:487px;width:49px;height:16px;background:#434343;border:1px solid #3c3c3c;border-radius:2px"></div>
  <div class="abs" style="left:216px;top:488px;width:1px;height:14px;background:#555"></div>
  <span class="t" style="left:184px;top:490px;font-size:10.500px;color:#f0f0f0">100%</span>
  <svg style="left:220px;top:494px" width="7" height="4" viewBox="0 0 7 4"><path d="M.5.5l3 3 3-3" fill="none" stroke="#c9c9c9" stroke-width="1"/></svg>
  <!-- layer rows -->
  <div class="abs" style="left:0;top:510px;width:354px;height:1px;background:#484848"></div>
  <div class="abs" style="left:354px;top:510px;width:17px;height:87px;background:#4a4a4a"></div>
  <div class="abs" style="left:30px;top:511px;width:324px;height:39px;background:#6a6a6a"></div>
  <div class="abs" style="left:29px;top:511px;width:1px;height:73px;background:#4a4a4a"></div>
  <div class="abs" style="left:0;top:550px;width:354px;height:1px;background:#484848"></div>
  <div class="abs" style="left:0;top:584px;width:354px;height:1px;background:#484848"></div>
  <div class="abs" style="left:0;top:585px;width:354px;height:12px;background:#4d4d4d"></div>
  <!-- eyes -->
  <svg style="left:9px;top:526px" width="14" height="10" viewBox="0 0 14 10"><path d="M.3 5C2 1.800 4.500.6 7 .6S12 1.800 13.700 5C12 8.200 9.500 9.400 7 9.400S2 8.200.3 5Z" fill="#e8e8e8"/><circle cx="7" cy="5" r="2.500" fill="#535353"/><circle cx="7" cy="5" r="1.100" fill="#e8e8e8"/></svg>
  <svg style="left:9px;top:563px" width="14" height="10" viewBox="0 0 14 10"><path d="M.3 5C2 1.800 4.500.6 7 .6S12 1.800 13.700 5C12 8.200 9.500 9.400 7 9.400S2 8.200.3 5Z" fill="#e8e8e8"/><circle cx="7" cy="5" r="2.500" fill="#535353"/><circle cx="7" cy="5" r="1.100" fill="#e8e8e8"/></svg>
  <!-- layer 1 thumb -->
  <svg style="left:31px;top:513px" width="38" height="37" viewBox="0 0 38 37"><path d="M.5 12V.5H13M25 .5H37.500V12M37.500 25V36.500H25M13 36.500H.5V25" fill="none" stroke="#e4e4e4" stroke-width="1.200"/></svg>
  <span class="t" style="left:43px;top:521.500px;font-family:'Liberation Serif',serif;font-weight:bold;font-size:20px;color:#ececec;transform:scaleX(1.08);transform-origin:0 0">T</span>
  <span class="t" style="left:75px;top:526px;font-size:10.500px;color:#f0f0f0">Layer 1</span>
  <div class="abs" style="left:34px;top:556px;width:32px;height:24px;background:#000;border:1px solid #3a3a3a"></div>
  <span class="t" style="left:75px;top:563px;font-size:10.500px;font-style:italic;color:#f0f0f0">Background</span>
  <svg style="left:328px;top:561px" width="10" height="12" viewBox="0 0 10 12"><path d="M2.600 5.500V3.500A2.400 2.400 0 0 1 7.400 3.500V5.500" fill="none" stroke="#d8d8d8" stroke-width="1.200"/><rect x=".6" y="5.100" width="8.800" height="6.300" rx=".8" fill="none" stroke="#d8d8d8" stroke-width="1.200"/><rect x="4.300" y="7.200" width="1.400" height="2.200" fill="#d8d8d8"/></svg>
  <!-- bottom bar y 655..680 -->
  <div class="abs" style="left:0;top:597px;width:371px;height:1px;background:#454545"></div>
  <svg style="left:166px;top:605px" width="14" height="8" viewBox="0 0 14 8"><rect x=".7" y=".7" width="6.800" height="6.600" rx="3.300" fill="none" stroke="#8c8c8c" stroke-width="1.400"/><rect x="6.500" y=".7" width="6.800" height="6.600" rx="3.300" fill="none" stroke="#8c8c8c" stroke-width="1.400"/><path d="M4 4H10" stroke="#8c8c8c" stroke-width="1.400"/></svg>
  <span class="t" style="left:196px;top:601px;font-size:14px;font-style:italic;color:#8c8c8c;font-family:'Liberation Serif',serif">fx</span>
  <svg style="left:222px;top:603px" width="14" height="11" viewBox="0 0 14 11"><rect x="0" y="0" width="14" height="11" rx="1" fill="#8c8c8c"/><circle cx="7" cy="5.500" r="3" fill="#535353"/></svg>
  <svg style="left:249px;top:602px" width="13" height="13" viewBox="0 0 13 13"><circle cx="6.500" cy="6.500" r="5.600" fill="none" stroke="#8c8c8c" stroke-width="1.200"/><path d="M2.540 10.460A5.600 5.600 0 0 1 10.460 2.540Z" fill="#8c8c8c"/></svg>
  <svg style="left:275px;top:603px" width="14" height="11" viewBox="0 0 14 11"><path d="M0 0H5.500L7 1.800H14V11H0Z" fill="#8c8c8c"/></svg>
  <svg style="left:303px;top:602px" width="12" height="12" viewBox="0 0 12 12"><rect x=".6" y=".6" width="10.800" height="10.800" rx="1" fill="none" stroke="#8c8c8c" stroke-width="1.200"/><path d="M6 3.200V8.800M3.200 6H8.800" stroke="#8c8c8c" stroke-width="1.300"/></svg>
  <svg style="left:330px;top:601px" width="12" height="14" viewBox="0 0 12 14"><path d="M0 2.800H12M4 2.500V.6H8V2.500" fill="none" stroke="#8c8c8c" stroke-width="1.200"/><path d="M1.500 3.500L2.200 13.400H9.800L10.500 3.500" fill="none" stroke="#8c8c8c" stroke-width="1.200"/><path d="M4.300 5.500V11.500M6 5.500V11.500M7.700 5.500V11.500" stroke="#8c8c8c" stroke-width=".9"/></svg>
  <!--LAYERSBODY-->
</div>

<div class="abs" style="left:866px;top:58px;width:3px;height:623px;background:#3a3a3a;border-left:1px solid #5a5a5a"></div>
<div class="abs" style="left:907px;top:58px;width:2px;height:623px;background:#3c3c3c"></div>
<div class="abs" style="left:1278px;top:24px;width:2px;height:657px;background:#3c3c3c"></div>
<!-- TASKBAR -->
<div id="taskbar" class="abs"><div class="abs" style="left:0;top:1px;width:1280px;height:39px">
  <!-- start -->
  <svg style="left:16px;top:11px" width="16" height="16" viewBox="0 0 16 16"><path d="M0 2.300L6.500 1.400V7.600H0ZM7.300 1.300L16 0V7.600H7.300ZM0 8.400H6.500V14.600L0 13.700ZM7.300 8.400H16V16L7.300 14.700Z" fill="#fff"/></svg>
  <!-- search -->
  <div class="abs" style="left:48px;top:0;width:343px;height:39px;background:#f2f2f2"></div>
  <div class="abs" style="left:57px;top:8px;width:22px;height:22px;border-radius:50%;border:3px solid #111"></div>
  <span class="t" style="left:88px;top:12px;font-size:15px;color:#3b3b3b;letter-spacing:-.55px">Type here to search</span>
  <svg style="left:366px;top:10px" width="11" height="19" viewBox="0 0 11 19"><rect x="3" y=".6" width="5" height="10.500" rx="2.500" fill="none" stroke="#222" stroke-width="1.200"/><path d="M.7 8.500V9.500A4.800 4.800 0 0 0 10.300 9.500V8.500M5.500 14.300V18M2.500 18.300H8.500" fill="none" stroke="#222" stroke-width="1.200"/></svg>
  <!-- task view -->
  <svg style="left:407px;top:11px" width="18" height="16" viewBox="0 0 18 16"><rect x="3" y="3.500" width="9.500" height="9" fill="none" stroke="#fff" stroke-width="1.200"/><path d="M3 .8H12.500M3 15.200H12.500M15 3.500V12.500M17.300 1V3M17.300 13V15M.6 1V3M.6 13V15" stroke="#fff" stroke-width="1.200"/></svg>
  <!-- edge -->
  <span id="edge" class="t" style="left:455.500px;top:-3.500px;font-size:39px;font-weight:bold;color:#1f7fe0;transform:scaleX(1.1);transform-origin:0 0">e</span>
  <!-- explorer -->
  <svg style="left:506px;top:9.500px" width="22.500" height="18.500" viewBox="0 0 23 19" preserveAspectRatio="none"><path d="M0 1H8L10 3H23V18H0Z" fill="#f3c94b"/><path d="M0 5H23V18H0Z" fill="#fbe08a"/><path d="M5 10H18V18H5Z" fill="#3f9be0"/><path d="M8 13H15V18H8Z" fill="#fbe08a"/></svg>
  <!-- store -->
  <svg style="left:555px;top:4px" width="25" height="26" viewBox="0 0 26 23" preserveAspectRatio="none"><path d="M8 8C8 3 18 3 18 8" fill="none" stroke="#fff" stroke-width="1.500"/><rect x="1" y="8" width="24" height="15" fill="#fff"/><rect x="7.500" y="11" width="5" height="4.500" fill="#f25022"/><rect x="13.500" y="11" width="5" height="4.500" fill="#7fba00"/><rect x="7.500" y="16.500" width="5" height="4.500" fill="#00a4ef"/><rect x="13.500" y="16.500" width="5" height="4.500" fill="#ffb900"/></svg>
  <!-- mail -->
  <svg style="left:605px;top:10px" width="25" height="19" viewBox="0 0 25 19"><rect width="25" height="19" fill="#fff"/><path d="M0 0L12.500 10 25 0" fill="#0a111b"/></svg>
  <!-- chrome -->
  <svg style="left:655px;top:6px" width="26" height="26" viewBox="0 0 26 26"><circle cx="13" cy="13" r="13" fill="#db4437"/><path d="M13 13L1.740 6.500A13 13 0 0 0 13 26Z" fill="#0f9d58"/><path d="M13 13L13 26A13 13 0 0 0 24.260 6.500Z" fill="#ffcd40"/><path d="M13 13L1.740 19.500A13 13 0 0 0 13 26L19 16Z" fill="#0f9d58"/><circle cx="13" cy="13" r="6" fill="#fff"/><circle cx="13" cy="13" r="4.700" fill="#4285f4"/></svg>
  <!-- opera -->
  <svg style="left:705px;top:6px" width="25" height="26" viewBox="0 0 25 26"><ellipse cx="12.500" cy="13" rx="12.300" ry="12.800" fill="#e8352c"/><ellipse cx="12.500" cy="13" rx="5.800" ry="9.800" fill="#0a111b"/></svg>
  <!-- blue app -->
  <svg style="left:755px;top:8px" width="25" height="24" viewBox="0 0 25 24"><rect width="25" height="24" fill="#4660a9"/><path d="M10.500 5H14.500V9.500H19V13.500H14.500V24H10.500V13.500H6.500V9.500H10.500Z" fill="#fff"/></svg>
  <!-- photoshop active -->
  <div class="abs" style="left:793px;top:0;width:49px;height:39px;background:#323b49"></div>
  <div class="abs" style="left:793px;top:37px;width:49px;height:2px;background:#76b9ed"></div>
  <svg style="left:805px;top:7px" width="24" height="23" viewBox="0 0 24 23"><rect x="1" y="1" width="22" height="21" rx="3" fill="#0a1a2b" stroke="#31a8ff" stroke-width="1.600"/><text x="12" y="13.500" font-family="Liberation Sans, sans-serif" font-size="12" font-weight="bold" fill="#e8f4ff" text-anchor="middle">Ps</text></svg>
  <!-- tray -->
  <svg style="left:994px;top:10px" width="16" height="17" viewBox="0 0 16 17"><circle cx="10.500" cy="3.500" r="2.800" fill="none" stroke="#fff" stroke-width="1.200"/><path d="M6.500 10.500C7 7.500 14.500 7.500 15.300 11.500" fill="none" stroke="#fff" stroke-width="1.200"/><circle cx="4.800" cy="9" r="2.400" fill="none" stroke="#fff" stroke-width="1.200"/><path d="M.7 16.500C1 12.500 8.500 12.500 9 16.500" fill="none" stroke="#fff" stroke-width="1.200"/></svg>
  <svg style="left:1031px;top:16px" width="13" height="7" viewBox="0 0 13 7"><path d="M.6 6.500L6.500.8 12.400 6.500" fill="none" stroke="#fff" stroke-width="1.200"/></svg>
  <svg style="left:1052px;top:14px" width="18" height="10" viewBox="0 0 18 10"><rect x="4.500" y="1.500" width="12" height="7" fill="none" stroke="#fff" stroke-width="1.100"/><rect x="6" y="3" width="9" height="4" fill="#fff"/><path d="M17 4V6" stroke="#fff" stroke-width="1.200"/><path d="M0 3.500H2.500V1.500M2.500 3.500V6.500H4.500M1 1V3.500" fill="none" stroke="#fff" stroke-width="1"/></svg>
  <svg style="left:1079px;top:13px" width="14" height="13" viewBox="0 0 14 13"><path d="M1 12.500A11.500 11.500 0 0 1 12.500 1" fill="none" stroke="#fff" stroke-width="1.100"/><path d="M4.500 12.500A8 8 0 0 1 12.500 4.500" fill="none" stroke="#fff" stroke-width="1.100" opacity=".6"/><path d="M8 12.500A4.500 4.500 0 0 1 12.500 8" fill="none" stroke="#fff" stroke-width="1.100" opacity=".6"/><circle cx="12" cy="12" r="1.200" fill="#fff"/></svg>
  <svg style="left:1101px;top:13px" width="17" height="13" viewBox="0 0 17 13"><path d="M.6 4.300H3.500L7.200 1V12L3.500 8.700H.6Z" fill="none" stroke="#fff" stroke-width="1.100"/><path d="M9.500 4.300C10.500 5.500 10.500 7.500 9.500 8.700M11.800 2.500C13.800 5 13.800 8 11.800 10.500M14 .8C17 4.500 17 8.500 14 12.200" fill="none" stroke="#fff" stroke-width="1"/></svg>
  <span class="t" style="left:1128px;top:14px;font-size:12px;color:#fff;letter-spacing:-.3px">ENG</span>
  <span class="t" style="left:1168px;top:4px;font-size:12px;color:#fff">8:53 AM</span>
  <span class="t" style="left:1167px;top:23px;font-size:12px;color:#fff">6/9/2021</span>
  <svg style="left:1238px;top:9px" width="26" height="23" viewBox="0 0 26 23"><path d="M1 1H17V13H6L1 17.500Z" fill="#fff"/><path d="M4 4.500H14M4 7H14M4 9.500H14" stroke="#0a111b" stroke-width="1"/><circle cx="16.500" cy="16" r="6" fill="#1b2230" stroke="#9aa0aa" stroke-width="1"/><text x="16.500" y="19.700" font-family="Liberation Sans, sans-serif" font-size="10" font-weight="bold" fill="#fff" text-anchor="middle">1</text></svg>
  <div class="abs" style="left:1275px;top:0;width:1px;height:39px;background:#5a6270"></div>
</div></div>

<!-- RECORDER -->
<div id="rec" class="abs" style="left:565px;top:638px;width:359px;height:58px;background:#4a4a4a;box-shadow:0 0 2px rgba(0,0,0,.5)">
  <!-- record -->
  <div class="rc" style="left:0;top:0;width:48px;height:58px"></div>
  <div class="abs" style="left:12px;top:16px;width:25px;height:25px;background:#e81224;box-shadow:0 0 3px 1.500px rgba(255,235,235,.9)"></div>
  <!-- camera -->
  <div class="rc" style="left:49px;top:0;width:28px;height:28px"></div>
  <svg style="left:53px;top:6px" width="21" height="17" viewBox="0 0 21 17"><path d="M2 3V1.800H4.500V3Z" fill="#3e4a6e"/><path d="M0 4.500Q0 3 1.500 3H6L7.500 .5H14L15.500 3H19.500Q21 3 21 4.500V15.500Q21 17 19.500 17H1.500Q0 17 0 15.500Z" fill="#4c5880" stroke="#e8ecf6" stroke-width=".6"/><circle cx="10.700" cy="9.800" r="5" fill="#2f3a5e"/><circle cx="10.700" cy="9.800" r="3.300" fill="#5b6cc0"/><circle cx="11.500" cy="8.800" r="1.100" fill="#aab4ee"/><circle cx="18" cy="5.500" r="1" fill="#e6d36a"/></svg>
  <!-- pause -->
  <div class="rc" style="left:49px;top:29px;width:28px;height:29px"></div>
  <div class="abs" style="left:55px;top:36px;width:7px;height:15px;background:#3b86c6;box-shadow:0 0 2px 1px rgba(255,255,255,.85)"></div>
  <div class="abs" style="left:65px;top:36px;width:7px;height:15px;background:#3b86c6;box-shadow:0 0 2px 1px rgba(255,255,255,.85)"></div>
  <!-- timer -->
  <div class="abs" style="left:78px;top:0;width:81px;height:58px;background:#000"></div>
  <span class="t" style="left:80px;top:18px;font-family:'Liberation Mono',monospace;font-size:23px;color:#4f9a55;letter-spacing:-4.900px;transform:scaleY(1.200);transform-origin:0 0">00:02:55</span>
  <!-- resolution -->
  <div class="rc" style="left:159px;top:0;width:114px;height:28px"></div>
  <span class="t" style="left:177px;top:7px;font-size:14.500px;color:#fff;text-shadow:0 0 2px #000,1px 1px 1px #000;letter-spacing:-.2px">1920 × 1080</span>
  <!-- top right -->
  <div class="rc hi" style="left:274px;top:0;width:28px;height:28px"></div>
  <div class="abs" style="left:279px;top:7px;width:17px;height:14px;border:2px solid #2cae4b"></div>
  <div class="rc" style="left:303px;top:0;width:28px;height:28px"></div>
  <div class="abs" style="left:310px;top:16px;width:14px;height:3px;background:#3c80c2;box-shadow:0 0 2px 1px rgba(200,225,255,.7)"></div>
  <div class="rc" style="left:332px;top:0;width:27px;height:28px"></div>
  <svg style="left:339px;top:8px" width="13" height="13" viewBox="0 0 13 13"><path d="M1 1L12 12M12 1L1 12" stroke="#e0242e" stroke-width="2.200" stroke-linecap="round"/></svg>
  <!-- bottom row -->
  <div class="rc hi2" style="left:159px;top:29px;width:28px;height:29px"></div>
  <svg style="left:163px;top:34px" width="21" height="19" viewBox="0 0 21 19"><path d="M1 6.500H5L10 2V17L5 12.500H1Z" fill="#9cc3e6" stroke="#2f78b8" stroke-width="1.300" stroke-linejoin="round"/><path d="M12.500 6C14 8 14 11 12.500 13M14.800 3.500C17.500 7 17.500 12 14.800 15.500M17 1.500C21 6 21 13 17 17.500" fill="none" stroke="#2f78b8" stroke-width="1.500"/></svg>
  <div class="rc hi2" style="left:188px;top:29px;width:27px;height:29px"></div>
  <svg style="left:196px;top:33px" width="12" height="21" viewBox="0 0 12 21"><rect x="3" y=".6" width="6" height="12" rx="3" fill="#a9cdea" stroke="#3a84c2" stroke-width="1.100"/><path d="M3.500 4H8.500M3.500 6.300H8.500M3.500 8.600H8.500" stroke="#3a84c2" stroke-width=".8"/><path d="M.8 9V10.500A5.200 5.200 0 0 0 11.200 10.500V9M6 16V19M2.500 19.800H9.500" fill="none" stroke="#3a84c2" stroke-width="1.400"/></svg>
  <div class="rc" style="left:216px;top:29px;width:28px;height:29px"></div>
  <svg style="left:221px;top:33px" width="19" height="22" viewBox="0 0 19 22"><path d="M3 20.500Q9.500 15 16 20.500V21.500H3Z" fill="#55729a" stroke="#dfe8f4" stroke-width=".6"/><circle cx="9.500" cy="9.500" r="8.300" fill="#7f9cc2" stroke="#dfe8f4" stroke-width=".8"/><circle cx="9.500" cy="9.500" r="5.300" fill="#3f88c8"/><path d="M5.500 8.500A4.200 4.200 0 0 1 13.500 8.500Z" fill="#79b4e6"/></svg>
  <div class="rc" style="left:245px;top:29px;width:28px;height:29px"></div>
  <svg style="left:253px;top:34px" width="13" height="19" viewBox="0 0 13 19"><path d="M1.200 1.200V15L4.800 11.800 7 17.500 9.300 16.500 7 11H12Z" fill="#8a8a8a" stroke="#0c0c0c" stroke-width="1.800" stroke-linejoin="miter"/></svg>
  <div class="rc" style="left:274px;top:29px;width:28px;height:29px"></div>
  <svg style="left:278px;top:33px" width="20" height="21" viewBox="0 0 20 21"><path d="M14.500 1L19 5.500 6.500 18 2 13.500Z" fill="#2d8fd2"/><path d="M2 13.500L6.500 18 .8 20Z" fill="#f2d7b5"/><path d="M.8 20L2.300 19.500 1.300 18.500Z" fill="#333"/></svg>
  <div class="rc" style="left:303px;top:29px;width:28px;height:29px"></div>
  <svg style="left:307px;top:35px" width="21" height="17" viewBox="0 0 21 17"><path d="M.5 1.500Q.5.500 1.500.500H7L9 2.500H17Q18 2.500 18 3.500V16H.5Z" fill="#e8b83a"/><path d="M3.500 6.500H20.500L17.500 16.500H.5Z" fill="#f7d463"/></svg>
  <div class="rc" style="left:332px;top:29px;width:27px;height:29px"></div>
  <svg style="left:336px;top:33px" width="21" height="21" viewBox="0 0 21 21"><g fill="#44688e" stroke="#e3ebf5" stroke-width=".5"><path d="M8.700 0H12.300L12.900 2.700 15 3.600 17.300 2.100 19.900 4.700 18.400 7 19.300 9.100 22 9.700" transform="scale(.0)"/></g><circle cx="10.500" cy="10.500" r="6.400" fill="none" stroke="#44688e" stroke-width="4.200"/><g stroke="#44688e" stroke-width="3.600"><path d="M10.500 0V4M10.500 17V21M0 10.500H4M17 10.500H21M3.080 3.080L5.900 5.900M15.100 15.100L17.920 17.920M3.080 17.920L5.900 15.100M15.100 5.900L17.920 3.080"/></g><circle cx="10.500" cy="10.500" r="2.400" fill="#f2f5fa"/></svg>
</div>

</div>
</body>
</html>
